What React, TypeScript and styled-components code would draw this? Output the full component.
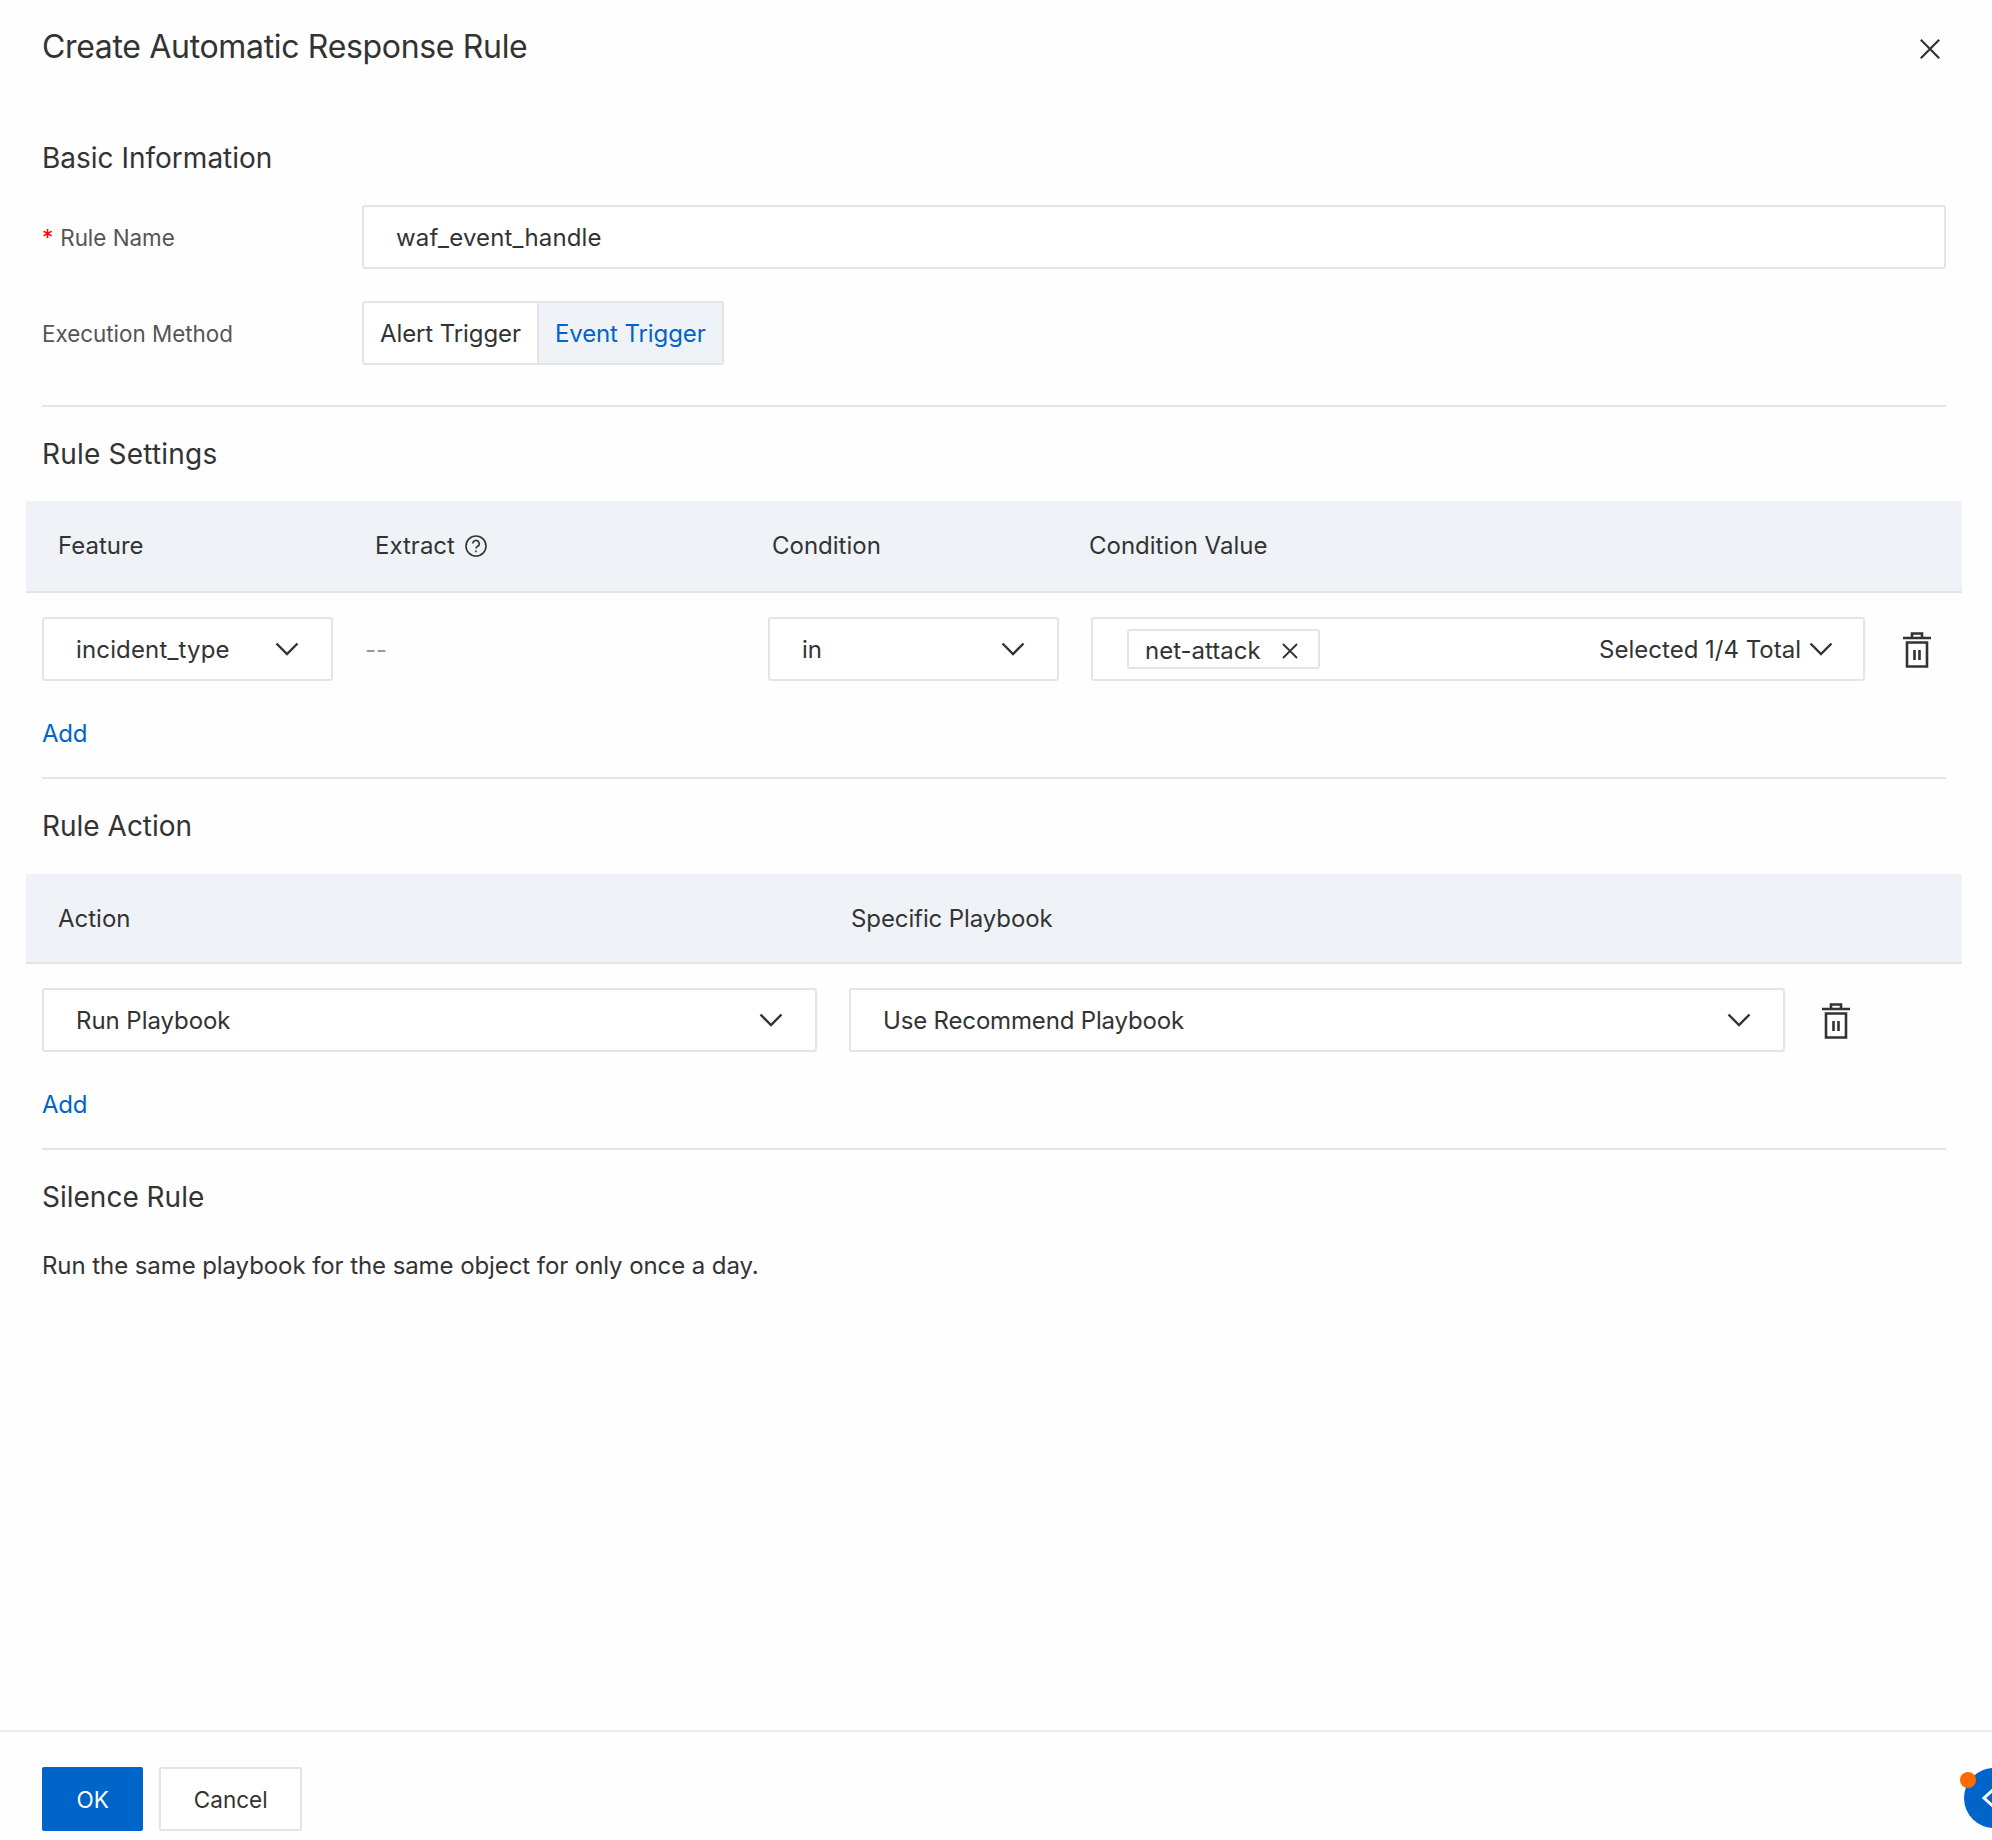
import styled, { createGlobalStyle } from "styled-components";

const GlobalStyle = createGlobalStyle`
  html, body {
    margin: 0;
    padding: 0;
    background: #fefefe;
  }
  * {
    box-sizing: border-box;
  }
`;

const Page = styled.div`
  position: relative;
  width: 1992px;
  height: 1840px;
  overflow: hidden;
  display: flex;
  flex-direction: column;
  font-family: Inter, "Liberation Sans", sans-serif;
  font-size: 24px;
  color: #333;
`;
const Body = styled.div`
  flex: 1;
  padding: 24px 46px 0 42px;
`;
const TitleBar = styled.div`
  display: flex;
  justify-content: space-between;
  align-items: flex-start;
  margin-right: 6px;
`;
const Title = styled.h1`
  margin: 0;
  font-size: 32px;
  line-height: 45px;
  font-weight: 400;
  letter-spacing: -0.33px;
  color: #333;
`;
const CloseButton = styled.div`
  margin-top: 15px;
  width: 20px;
  height: 20px;
  line-height: 0;
`;
const SectionTitle = styled.h2<{ $top: number; $spacing?: number }>`
  margin: ${(props) => props.$top}px 0 0 0;
  font-size: 28px;
  line-height: 40px;
  font-weight: 400;
  letter-spacing: ${(props) => props.$spacing ?? 0}px;
  color: #333;
`;
const FormRow = styled.div<{ $top: number }>`
  display: flex;
  align-items: center;
  margin-top: ${(props) => props.$top}px;
`;
const Label = styled.div`
  width: 320px;
  font-size: 22.4px;
  color: #555;
`;
const Required = styled.span`
  color: #f00;
  margin-right: 7px;
`;
const TextInput = styled.div`
  flex: 1;
  height: 64px;
  padding: 0 32px;
  display: flex;
  align-items: center;
  border: 2px solid #e3e4e6;
  border-radius: 3px;
  background: #fff;
  letter-spacing: 0.15px;
`;
const Segments = styled.div`
  display: flex;
  height: 64px;
  border: 2px solid #e3e4e6;
  border-radius: 3px;
  letter-spacing: -0.1px;
`;
const Segment = styled.div<{ $active?: boolean }>`
  display: flex;
  align-items: center;
  padding: 0 16px;
  background: ${(props) => (props.$active ? "#eff3f8" : "#fff")};
  color: ${(props) => (props.$active ? "#0064c8" : "#333")};
  border-left: ${(props) => (props.$active ? "2px solid #e3e4e6" : "0")};
`;
const Divider = styled.div<{ $top: number }>`
  height: 2px;
  margin-top: ${(props) => props.$top}px;
  background: #e3e4e6;
`;
const TableHead = styled.div<{ $columns: string; $top?: number; $height?: number; $lift?: number }>`
  display: grid;
  grid-template-columns: ${(props) => props.$columns};
  align-items: center;
  height: ${(props) => props.$height ?? 92}px;
  margin: ${(props) => props.$top ?? 27}px -16px 0;
  padding-left: 32px;
  padding-bottom: ${(props) => props.$lift ?? 1}px;
  background: #eff3f8;
  border-bottom: 2px solid #e3e4e6;
`;
const HeadCell = styled.div<{ $spacing?: number }>`
  display: flex;
  align-items: center;
  gap: 10px;
  letter-spacing: ${(props) => props.$spacing ?? 0}px;
`;
const TableRow = styled.div<{ $columns: string }>`
  display: grid;
  grid-template-columns: ${(props) => props.$columns};
  column-gap: 32px;
  align-items: center;
  margin-top: 24px;
`;
const Select = styled.div<{ $spacing?: number }>`
  height: 64px;
  padding: 0 32px;
  display: flex;
  align-items: center;
  justify-content: space-between;
  border: 2px solid #e3e4e6;
  border-radius: 3px;
  background: #fff;
  color: #333;
  letter-spacing: ${(props) => props.$spacing ?? 0}px;
`;
const Chevron = styled.svg`
  flex: none;
  width: 24px;
  height: 14px;
`;
const Empty = styled.div`
  color: #999;
`;
const MultiSelect = styled(Select)`
  padding: 0 30px 0 34px;
`;
const Tag = styled.div`
  height: 40px;
  padding: 3px 20px 0 16px;
  display: flex;
  align-items: center;
  gap: 21px;
  border: 2px solid #e3e4e6;
  border-radius: 3px;
`;
const Count = styled.div`
  display: flex;
  align-items: center;
  gap: 8px;
`;
const TrashIcon = styled.svg`
  display: block;
  width: 28px;
  height: 36px;
`;
const TrashCell = styled.div<{ $inset: number }>`
  padding: 2px 0 0 ${(props) => props.$inset}px;
`;
const AddLink = styled.div`
  margin-top: 37px;
  line-height: 32px;
  letter-spacing: -0.2px;
  color: #0064c8;
`;
const Paragraph = styled.p`
  margin: 33px 0 0 0;
  font-size: 24px;
  line-height: 32px;
  letter-spacing: -0.08px;
  color: #333;
`;
const Footer = styled.div`
  height: 110px;
  padding: 35px 42px 0;
  display: flex;
  gap: 16px;
  font-size: 22.5px;
  border-top: 2px solid #eaebed;
`;
const Button = styled.div<{ $primary?: boolean }>`
  height: 64px;
  padding: 0 32.5px;
  display: flex;
  align-items: center;
  border-radius: 2px;
  border: 2px solid ${(props) => (props.$primary ? "#0064c8" : "#e3e4e6")};
  background: ${(props) => (props.$primary ? "#0064c8" : "#fff")};
  color: ${(props) => (props.$primary ? "#fff" : "#333")};
`;
const HelperBubble = styled.div`
  position: absolute;
  left: 1964px;
  top: 1768px;
  width: 60px;
  height: 60px;
  border-radius: 50%;
  background: #0064c8;
`;
const HelperChevron = styled.svg`
  position: absolute;
  left: 17px;
  top: 18px;
  width: 16px;
  height: 24px;
`;
const HelperDot = styled.div`
  position: absolute;
  left: 1960px;
  top: 1772px;
  width: 16px;
  height: 16px;
  border-radius: 50%;
  background: #ff6a00;
`;

function ChevronDown() {
  return (
    <Chevron viewBox="0 0 24 14" fill="none" stroke="#333" strokeWidth="2.4">
      <path d="M1.5 1.5 12 12 22.5 1.5" />
    </Chevron>
  );
}

function Trash() {
  return (
    <TrashIcon viewBox="0 0 28 36" fill="none" stroke="#333" strokeWidth="2.6">
      <path d="M0 6h28M9 6V1.5h10V6" />
      <path d="M4 10.5h20v24H4z" />
      <path d="M11.5 18v10M16.5 18v10" />
    </TrashIcon>
  );
}

function App() {
  const conditionColumns = "317px 397px 317px 1fr";
  const conditionRow = "291px 371px 291px 774px 1fr";
  const actionColumns = "793px 1fr";
  const actionRow = "775px 936px 1fr";
  return (
    <Page>
      <GlobalStyle />
      <Body>
        <TitleBar>
          <Title>Create Automatic Response Rule</Title>
          <CloseButton>
            <svg width="20" height="20" viewBox="0 0 20 20" fill="none" stroke="#333" strokeWidth="2.2">
              <path d="M.8.8l18.4 18.4M19.2.8.8 19.2" />
            </svg>
          </CloseButton>
        </TitleBar>
        <SectionTitle $top={69}>Basic Information</SectionTitle>
        <FormRow $top={27}>
          <Label>
            <Required>*</Required>Rule Name
          </Label>
          <TextInput>waf_event_handle</TextInput>
        </FormRow>
        <FormRow $top={32}>
          <Label>Execution Method</Label>
          <Segments>
            <Segment>Alert Trigger</Segment>
            <Segment $active>Event Trigger</Segment>
          </Segments>
        </FormRow>
        <Divider $top={40} />

        <SectionTitle $top={27} $spacing={0.2}>Rule Settings</SectionTitle>
        <TableHead $columns={conditionColumns}>
          <HeadCell>Feature</HeadCell>
          <HeadCell>
            Extract
            <svg width="22" height="22" viewBox="0 0 22 22" fill="none" stroke="#333" strokeWidth="1.6">
              <circle cx="11" cy="11" r="10" />
              <path d="M7.8 8.6a3.2 3.2 0 1 1 4.6 2.9c-.9.5-1.4 1-1.4 2.1" />
              <path d="M11 15.4v1.8" />
            </svg>
          </HeadCell>
          <HeadCell>Condition</HeadCell>
          <HeadCell>Condition Value</HeadCell>
        </TableHead>
        <TableRow $columns={conditionRow}>
          <Select $spacing={0.15}>
            incident_type
            <ChevronDown />
          </Select>
          <Empty>--</Empty>
          <Select>
            in
            <ChevronDown />
          </Select>
          <MultiSelect>
            <Tag>
              net-attack
              <svg width="16" height="16" viewBox="0 0 16 16" fill="none" stroke="#333" strokeWidth="1.8">
                <path d="M1 1l14 14M15 1 1 15" />
              </svg>
            </Tag>
            <Count>
              Selected 1/4 Total
              <ChevronDown />
            </Count>
          </MultiSelect>
          <TrashCell $inset={6}>
            <Trash />
          </TrashCell>
        </TableRow>
        <AddLink>Add</AddLink>
        <Divider $top={27} />

        <SectionTitle $top={27}>Rule Action</SectionTitle>
        <TableHead $columns={actionColumns} $top={28} $height={90} $lift={0}>
          <HeadCell>Action</HeadCell>
          <HeadCell $spacing={-0.1}>Specific Playbook</HeadCell>
        </TableHead>
        <TableRow $columns={actionRow}>
          <Select $spacing={-0.05}>
            Run Playbook
            <ChevronDown />
          </Select>
          <Select $spacing={-0.17}>
            Use Recommend Playbook
            <ChevronDown />
          </Select>
          <TrashCell $inset={5}>
            <Trash />
          </TrashCell>
        </TableRow>
        <AddLink>Add</AddLink>
        <Divider $top={27} />

        <SectionTitle $top={27}>Silence Rule</SectionTitle>
        <Paragraph>Run the same playbook for the same object for only once a day.</Paragraph>
      </Body>
      <Footer>
        <Button $primary>OK</Button>
        <Button>Cancel</Button>
      </Footer>
      <HelperBubble>
        <HelperChevron viewBox="0 0 16 24" fill="none" stroke="#fff" strokeWidth="3">
          <path d="M14 2 3 12l11 10" />
        </HelperChevron>
      </HelperBubble>
      <HelperDot />
    </Page>
  );
}

export default App;
